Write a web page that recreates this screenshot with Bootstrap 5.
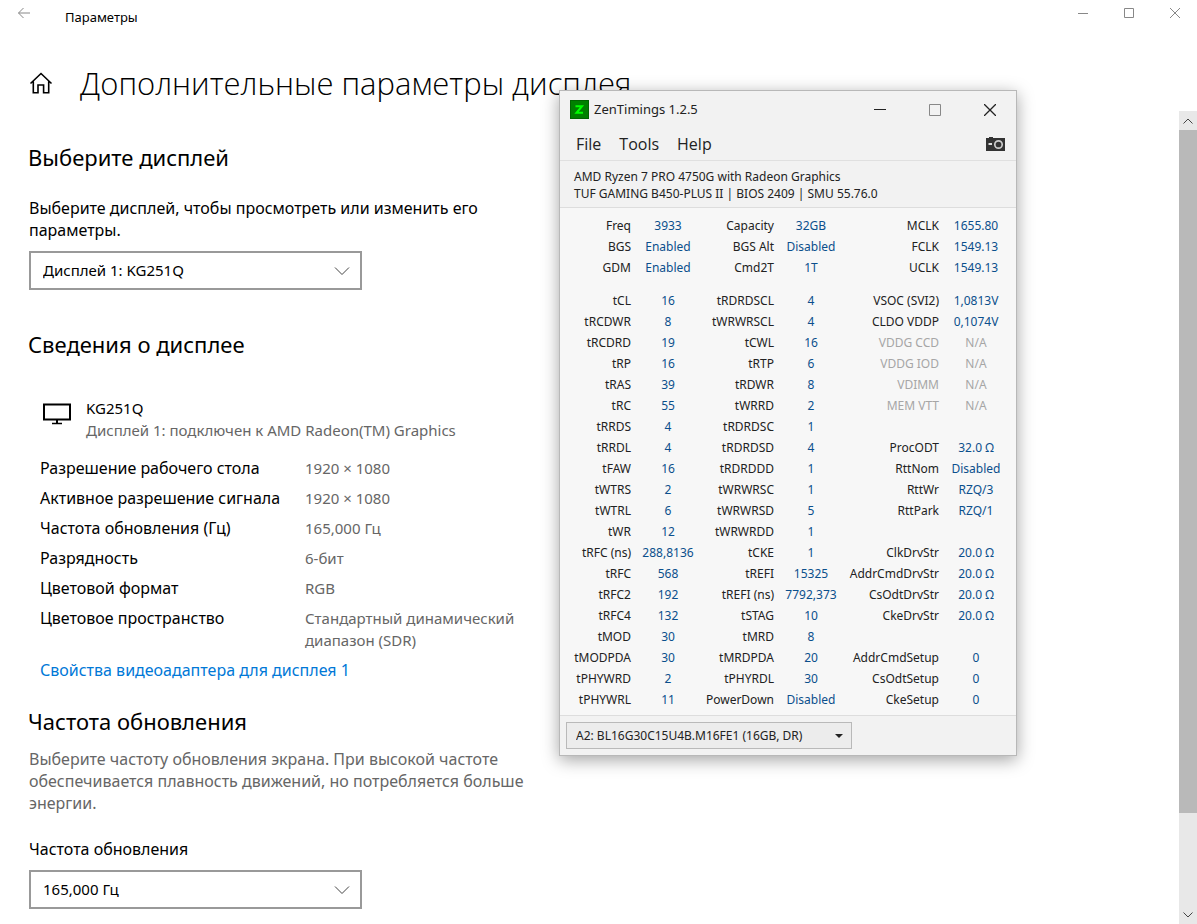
<!DOCTYPE html>
<html lang="ru">
<head>
<meta charset="utf-8">
<meta name="viewport" content="width=device-width, initial-scale=1">
<title>Параметры</title>
<link href="https://cdn.jsdelivr.net/npm/bootstrap@5.3.0/dist/css/bootstrap.min.css" rel="stylesheet">
<style>
  body { font-family: "Noto Sans", "Open Sans", sans-serif; font-size: 16px; line-height: 22px; color: #000; background: #fff; }
  button { font: inherit; }
  svg { display: block; }
  .plain-btn { border: 0; background: none; padding: 0; display: flex; align-items: center; justify-content: center; }
  .app-bar { height: 34px; }
  .app-bar .plain-btn { width: 46px; height: 26px; padding-left: 2px; color: #888; }
  .app-name { font-size: 13px; padding-left: 19px; }
  .page-head { height: 77px; padding: 27px 0 0 29px; }
  .page-head svg { margin-top: 10px; }
  .page-head h1 { font-family: "Open Sans", sans-serif; font-size: 31px; font-weight: 300; line-height: 44px; padding-left: 27px; }
  .content-pane { padding: 30px 0 14px 29px; }
  .content-col { max-width: 500px; }
  .content-col h2 { font-size: 22px; font-weight: 400; line-height: 32px; margin: 0 0 0 -1px; }
  .content-col h2.section-head { margin-top: 38px; }
  .field-label { display: block; margin-top: 24px; padding-bottom: 10px; }
  .soft { color: #666; }
  .form-select.big-select {
    width: 333px; height: 39px; border: 2px solid #999; border-radius: 0; padding: 0 40px 0 12px;
    font-size: 15px; color: #000; background-color: #fff;
    background-image: url("data:image/svg+xml,%3Csvg xmlns='http://www.w3.org/2000/svg' viewBox='0 0 16 16'%3E%3Cpath d='M1 4.500l7 7 7-7' fill='none' stroke='%23444'/%3E%3C/svg%3E");
    background-position: right 10px center; background-size: 16px 16px;
  }
  .device-row { margin: 37px 0 16px 14px; gap: 15px; font-size: 15px; }
  .device-row svg { margin-top: 6px; }
  .info-list { padding-left: 11px; row-gap: 8px; }
  .info-list dt { width: 265px; font-weight: 400; }
  .info-list dd { font-size: 15px; }
  .accent-link { color: #0078d7; text-decoration: none; padding-left: 11px; }
  .hint-text { margin: 11px 0 0; }
  .scroll-track { width: 18px; background: #e8e8e8; }
  .scroll-track .plain-btn { height: 19px; width: 18px; color: #444; }
  .scroll-thumb { height: 84%; background: #b9b9b9; }

  .zen { position: absolute; left: 559px; top: 90px; width: 458px; background: #f2f2f2; border: 1px solid #b8b8b8;
    box-shadow: 0 4px 16px rgba(0,0,0,.36); color: #222; font-size: 12px; line-height: 17px; }
  .zen-title { height: 37px; padding-left: 10px; gap: 5px; font-size: 13px; }
  .zen-title .plain-btn { width: 55px; height: 36px; padding-left: 2px; color: #222; }
  .zen-menu { height: 32px; padding: 0 11px 0 16px; font-size: 16px; }
  .zen-links { gap: 18px; }
  .zen-menu a { font-family: "Open Sans", sans-serif; color: #222; text-decoration: none; }
  .zen-info { border-top: 1px solid #e0e0e0; padding: 7px 14px 5px; }
  .zen-body { background: #f7f7f7; border-top: 1px solid #ddd; border-bottom: 1px solid #ddd; padding: 7px 0 5px; }
  .timings { table-layout: fixed; width: 447px; border-collapse: collapse; }
  .timings th, .timings td { height: 21px; padding: 0; white-space: nowrap; }
  .timings th { text-align: right; font-weight: 400; padding-right: 6px; }
  .timings td { text-align: center; color: #0b4f8c; }
  .timings tbody + tbody::before { content: ""; display: table-row; height: 12px; }
  .timings .off { color: #a6a6a6; }
  .w-a { width: 77px; } .w-v { width: 62px; } .w-b { width: 81px; } .w-c { width: 103px; }
  .zen-foot { padding: 6px; }
  .form-select.dimm { width: 286px; height: 27px; border: 1px solid #b9b9b9; border-radius: 0; background-color: #ececec;
    font-size: 12px; line-height: 17px; padding: 0 24px 0 9px; color: #222;
    background-image: url("data:image/svg+xml,%3Csvg xmlns='http://www.w3.org/2000/svg' viewBox='0 0 8 4'%3E%3Cpath d='M0 0h8L4 4z' fill='%23222'/%3E%3C/svg%3E");
    background-size: 8px 4px; background-position: right 8px center; }
</style>
</head>
<body class="d-flex flex-column min-vh-100 position-relative">
<header>
  <div class="app-bar d-flex">
    <button class="plain-btn" type="button" aria-label="Назад">
      <svg width="14" height="12" viewBox="0 0 14 12" fill="none" stroke="currentColor"><path d="M13 6H1.500M6.500 1l-5 5 5 5"/></svg>
    </button>
    <span class="app-name align-self-center">Параметры</span>
    <div class="d-flex ms-auto">
      <button class="plain-btn" type="button" aria-label="Свернуть"><svg width="10" height="10" fill="none" stroke="currentColor"><path d="M0 5.500h10"/></svg></button>
      <button class="plain-btn" type="button" aria-label="Развернуть"><svg width="10" height="10" fill="none" stroke="currentColor"><path d="M.5.5h9v9h-9z"/></svg></button>
      <button class="plain-btn" type="button" aria-label="Закрыть"><svg width="10" height="10" fill="none" stroke="currentColor"><path d="M0 0l10 10M10 0L0 10"/></svg></button>
    </div>
  </div>
  <div class="page-head d-flex">
    <a href="#" class="text-reset" aria-label="Главная">
      <svg width="24" height="24" viewBox="0 0 24 24" fill="none" stroke="#000" stroke-width="1.600"><path d="M1.500 12.500L12 2.500 22.500 12.500M4.300 10.500v11.200h4.700V14h5.600v7.700h5.100V10.500"/></svg>
    </a>
    <h1 class="m-0 text-nowrap">Дополнительные параметры дисплея</h1>
  </div>
</header>
<div class="d-flex flex-fill">
  <main class="content-pane flex-fill">
    <div class="content-col">
      <h2>Выберите дисплей</h2>
      <label for="display" class="field-label">Выберите дисплей, чтобы просмотреть или изменить его<br>параметры.</label>
      <select id="display" class="form-select big-select"><option>Дисплей 1: KG251Q</option></select>

      <h2 class="section-head">Сведения о дисплее</h2>
      <div class="device-row d-flex">
        <svg width="28" height="22" viewBox="0 0 28 22" fill="none" stroke="#000" stroke-width="2"><path d="M1 1.500h26v15H1zM14 16.500v4" /><path d="M9 20.500h10" stroke-width="1.500"/></svg>
        <div>
          <div>KG251Q</div>
          <div class="soft text-nowrap">Дисплей 1: подключен к AMD Radeon(TM) Graphics</div>
        </div>
      </div>
      <dl class="info-list d-grid mb-0">
        <div class="d-flex"><dt>Разрешение рабочего стола</dt><dd class="soft m-0">1920 × 1080</dd></div>
        <div class="d-flex"><dt>Активное разрешение сигнала</dt><dd class="soft m-0">1920 × 1080</dd></div>
        <div class="d-flex"><dt>Частота обновления (Гц)</dt><dd class="soft m-0">165,000 Гц</dd></div>
        <div class="d-flex"><dt>Разрядность</dt><dd class="soft m-0">6-бит</dd></div>
        <div class="d-flex"><dt>Цветовой формат</dt><dd class="soft m-0">RGB</dd></div>
        <div class="d-flex"><dt>Цветовое пространство</dt><dd class="soft m-0 text-nowrap">Стандартный динамический<br>диапазон (SDR)</dd></div>
      </dl>
      <a href="#" class="accent-link d-inline-block mt-2">Свойства видеоадаптера для дисплея 1</a>

      <h2 class="mt-4">Частота обновления</h2>
      <p class="hint-text soft text-nowrap">Выберите частоту обновления экрана. При высокой частоте<br>обеспечивается плавность движений, но потребляется больше<br>энергии.</p>
      <label for="rate" class="field-label">Частота обновления</label>
      <select id="rate" class="form-select big-select"><option>165,000 Гц</option></select>
    </div>
  </main>
  <div class="scroll-track d-flex flex-column">
    <button class="plain-btn" type="button" aria-label="Вверх"><svg width="10" height="6" fill="none" stroke="currentColor"><path d="M.5 5.500L5 1l4.500 4.500"/></svg></button>
    <div class="scroll-thumb"></div>
    <button class="plain-btn mt-auto" type="button" aria-label="Вниз"><svg width="10" height="6" fill="none" stroke="currentColor"><path d="M.5.5L5 5 9.500.5"/></svg></button>
  </div>
</div>

<section class="zen" lang="en" aria-label="ZenTimings">
  <div class="zen-title d-flex align-items-center">
    <svg width="19" height="19" viewBox="0 0 19 19"><path fill="#006400" d="M0 0h19v19H0z"/><path fill="#008000" d="M1 1h17v17H1z"/><path d="M5.500 6.200h6.500L6.500 12.800h6.500" fill="none" stroke="#0f0" stroke-width="2"/></svg>
    <span>ZenTimings 1.2.5</span>
    <div class="d-flex ms-auto">
      <button class="plain-btn" type="button" aria-label="Minimize"><svg width="12" height="12" fill="none" stroke="currentColor"><path d="M0 5.500h12"/></svg></button>
      <button class="plain-btn" type="button" aria-label="Maximize"><svg width="12" height="12" fill="none" stroke="#888"><path d="M.5.5h11v11H.5z"/></svg></button>
      <button class="plain-btn" type="button" aria-label="Close"><svg width="12" height="12" fill="none" stroke="currentColor" stroke-width="1.300"><path d="M0 0l12 12M12 0L0 12"/></svg></button>
    </div>
  </div>
  <nav class="zen-menu d-flex align-items-center">
    <div class="zen-links d-flex"><a href="#">File</a><a href="#">Tools</a><a href="#">Help</a></div>
    <button class="plain-btn ms-auto" type="button" aria-label="Screenshot">
      <svg width="19" height="14" viewBox="0 0 19 14"><path fill="#333" d="M0 1h3V0h4v1h12v13H0z"/><circle cx="12.500" cy="7.500" r="3.700" fill="#333" stroke="#ccc" stroke-width="1.700"/><path fill="#ddd" d="M2.500 6h3.500v2H2.500z"/></svg>
    </button>
  </nav>
  <div class="zen-info">AMD Ryzen 7 PRO 4750G with Radeon Graphics<br>TUF GAMING B450-PLUS II | BIOS 2409 | SMU 55.76.0</div>
  <div class="zen-body">
    <table class="timings">
      <colgroup><col class="w-a"><col class="w-v"><col class="w-b"><col class="w-v"><col class="w-c"><col class="w-v"></colgroup>
      <tbody>
        <tr><th>Freq</th><td>3933</td><th>Capacity</th><td>32GB</td><th>MCLK</th><td>1655.80</td></tr>
        <tr><th>BGS</th><td>Enabled</td><th>BGS Alt</th><td>Disabled</td><th>FCLK</th><td>1549.13</td></tr>
        <tr><th>GDM</th><td>Enabled</td><th>Cmd2T</th><td>1T</td><th>UCLK</th><td>1549.13</td></tr>
      </tbody>
      <tbody>
        <tr><th>tCL</th><td>16</td><th>tRDRDSCL</th><td>4</td><th>VSOC (SVI2)</th><td>1,0813V</td></tr>
        <tr><th>tRCDWR</th><td>8</td><th>tWRWRSCL</th><td>4</td><th>CLDO VDDP</th><td>0,1074V</td></tr>
        <tr><th>tRCDRD</th><td>19</td><th>tCWL</th><td>16</td><th class="off">VDDG CCD</th><td class="off">N/A</td></tr>
        <tr><th>tRP</th><td>16</td><th>tRTP</th><td>6</td><th class="off">VDDG IOD</th><td class="off">N/A</td></tr>
        <tr><th>tRAS</th><td>39</td><th>tRDWR</th><td>8</td><th class="off">VDIMM</th><td class="off">N/A</td></tr>
        <tr><th>tRC</th><td>55</td><th>tWRRD</th><td>2</td><th class="off">MEM VTT</th><td class="off">N/A</td></tr>
        <tr><th>tRRDS</th><td>4</td><th>tRDRDSC</th><td>1</td><td></td><td></td></tr>
        <tr><th>tRRDL</th><td>4</td><th>tRDRDSD</th><td>4</td><th>ProcODT</th><td>32.0 Ω</td></tr>
        <tr><th>tFAW</th><td>16</td><th>tRDRDDD</th><td>1</td><th>RttNom</th><td>Disabled</td></tr>
        <tr><th>tWTRS</th><td>2</td><th>tWRWRSC</th><td>1</td><th>RttWr</th><td>RZQ/3</td></tr>
        <tr><th>tWTRL</th><td>6</td><th>tWRWRSD</th><td>5</td><th>RttPark</th><td>RZQ/1</td></tr>
        <tr><th>tWR</th><td>12</td><th>tWRWRDD</th><td>1</td><td></td><td></td></tr>
        <tr><th>tRFC (ns)</th><td>288,8136</td><th>tCKE</th><td>1</td><th>ClkDrvStr</th><td>20.0 Ω</td></tr>
        <tr><th>tRFC</th><td>568</td><th>tREFI</th><td>15325</td><th>AddrCmdDrvStr</th><td>20.0 Ω</td></tr>
        <tr><th>tRFC2</th><td>192</td><th>tREFI (ns)</th><td>7792,373</td><th>CsOdtDrvStr</th><td>20.0 Ω</td></tr>
        <tr><th>tRFC4</th><td>132</td><th>tSTAG</th><td>10</td><th>CkeDrvStr</th><td>20.0 Ω</td></tr>
        <tr><th>tMOD</th><td>30</td><th>tMRD</th><td>8</td><td></td><td></td></tr>
        <tr><th>tMODPDA</th><td>30</td><th>tMRDPDA</th><td>20</td><th>AddrCmdSetup</th><td>0</td></tr>
        <tr><th>tPHYWRD</th><td>2</td><th>tPHYRDL</th><td>30</td><th>CsOdtSetup</th><td>0</td></tr>
        <tr><th>tPHYWRL</th><td>11</td><th>PowerDown</th><td>Disabled</td><th>CkeSetup</th><td>0</td></tr>
      </tbody>
    </table>
  </div>
  <div class="zen-foot"><select class="form-select dimm" aria-label="Memory module"><option>A2: BL16G30C15U4B.M16FE1 (16GB, DR)</option></select></div>
</section>
<script src="https://cdn.jsdelivr.net/npm/bootstrap@5.3.0/dist/js/bootstrap.bundle.min.js"></script>
</body>
</html>
